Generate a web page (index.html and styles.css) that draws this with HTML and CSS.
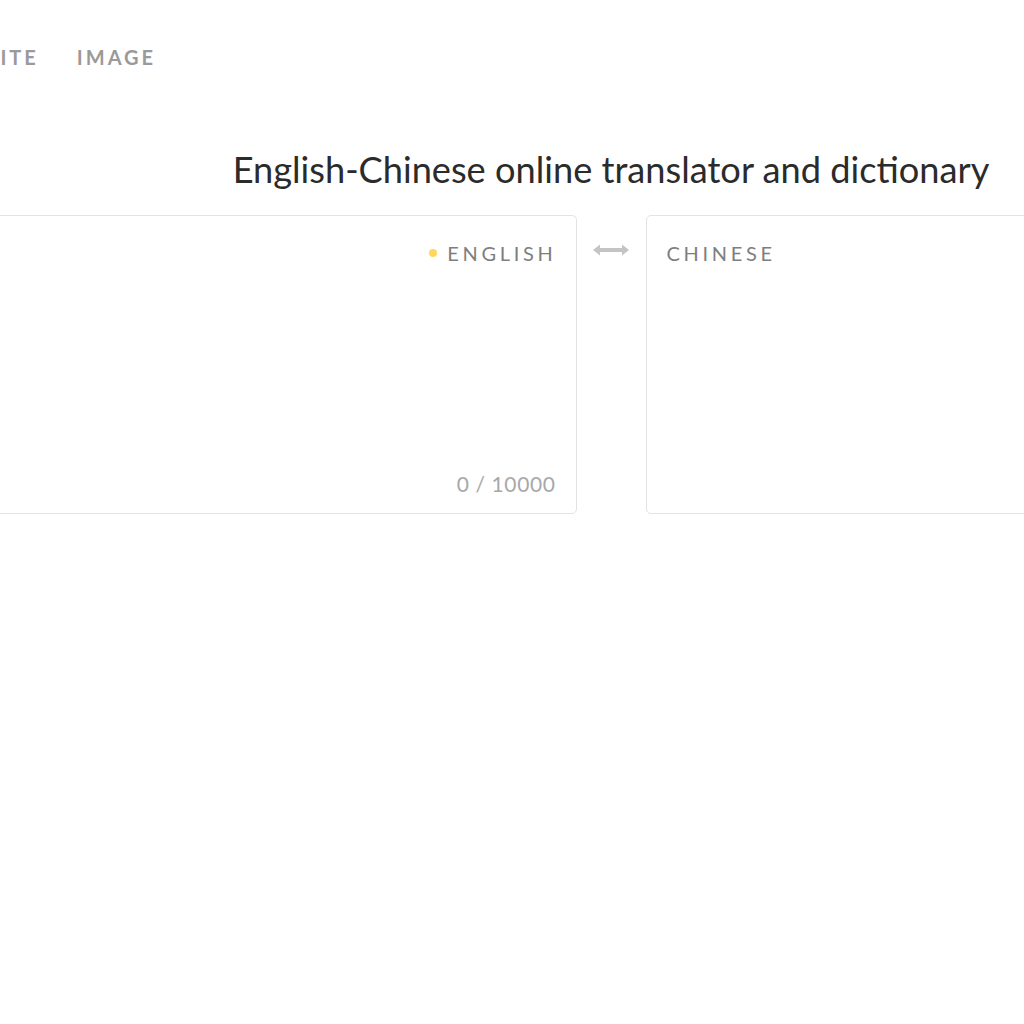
FILE: index.html
```html
<!DOCTYPE html>
<html lang="en">
<head>
<meta charset="utf-8">
<title>English-Chinese online translator and dictionary</title>
<link rel="stylesheet" href="styles.css">
</head>
<body>
<div class="page">
  <nav class="tabs">
    <a class="tab">TRANSLATE</a>
    <a class="tab">WRITE</a>
    <a class="tab">IMAGE</a>
  </nav>
  <h1 class="title">English-Chinese online translator and dictionary</h1>
  <div class="panes">
    <div class="card card-source">
      <div class="card-head head-right">
        <span class="dot"></span>
        <span class="lang">ENGLISH</span>
      </div>
      <div class="card-body"></div>
      <div class="counter">0 / 10000</div>
    </div>
    <div class="swap">
      <svg width="38" height="14" viewBox="0 0 38 14" aria-hidden="true">
        <path d="M1 7 L8 1.5 L8 5 L30 5 L30 1.5 L37 7 L30 12.5 L30 9 L8 9 L8 12.5 Z" fill="#c4c4c4"/>
      </svg>
    </div>
    <div class="card card-target">
      <div class="card-head">
        <span class="lang">CHINESE</span>
      </div>
      <div class="card-body"></div>
    </div>
  </div>
</div>
</body>
</html>
```
FILE: styles.css
```css
html, body {
  margin: 0;
  padding: 0;
  background: #ffffff;
  overflow: hidden;
}
body {
  font-family: "Lato", "Liberation Sans", sans-serif;
  color: #333333;
}
.page {
  width: 1400px;
  margin-left: -89px;
}
.tabs {
  display: flex;
  gap: 38px;
  padding-top: 44px;
  margin-left: -127px;
}
.tab {
  font-size: 20px;
  font-weight: 700;
  letter-spacing: 3px;
  color: #9a9a9a;
  line-height: 26px;
}
.title {
  margin: 76px 0 0 0;
  text-align: center;
  font-size: 36.2px;
  font-weight: 400;
  line-height: 46px;
  color: #2b2b2b;
}
.panes {
  display: flex;
  justify-content: center;
  margin-top: 23px;
}
.card {
  width: 640px;
  height: 299px;
  box-sizing: border-box;
  border: 1px solid #e3e3e3;
  border-radius: 5px;
  display: flex;
  flex-direction: column;
  padding: 25px 20px 17px 20px;
}
.card-head {
  display: flex;
  align-items: center;
  gap: 10px;
  height: 24px;
}
.head-right {
  justify-content: flex-end;
}
.dot {
  width: 8px;
  height: 8px;
  border-radius: 50%;
  background: #fdd85a;
}
.lang {
  font-size: 20px;
  letter-spacing: 3.7px;
  color: #7e7e7e;
  line-height: 24px;
}
.card-head.head-right .lang {
  margin-right: -1px;
}
.card-body {
  flex: 1;
}
.counter {
  text-align: right;
  font-size: 21px;
  color: #a8a8a8;
  line-height: 24px;
  letter-spacing: 0.6px;
}
.swap {
  width: 69px;
  display: flex;
  justify-content: center;
  padding-top: 28px;
  box-sizing: border-box;
}
```
